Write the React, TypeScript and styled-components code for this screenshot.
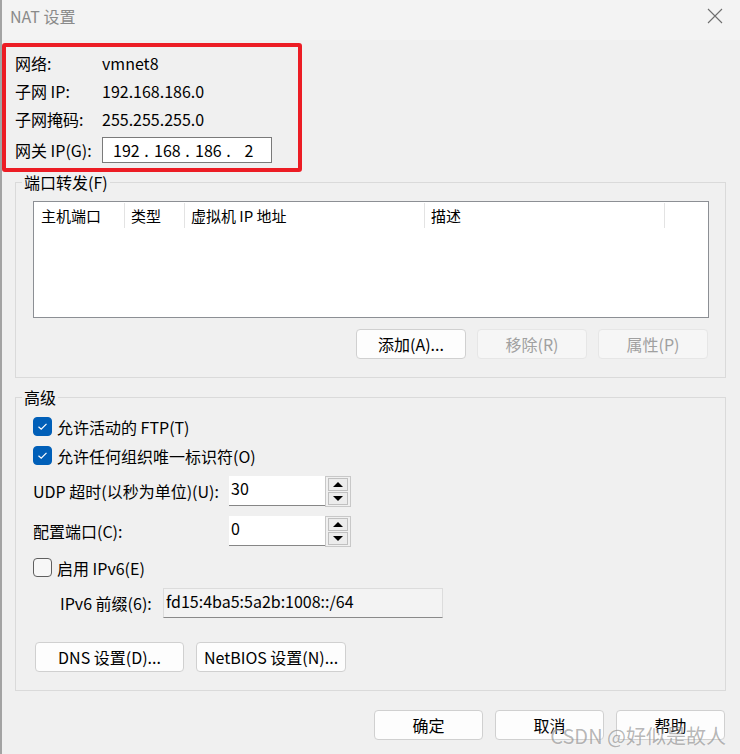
import React from "react";
import styled, { createGlobalStyle } from "styled-components";

const GlobalStyle = createGlobalStyle`
  html, body { margin: 0; padding: 0; background: #f0f0f0; }
  #root { width: 740px; height: 754px; }
`;

const FONT = `"Noto Sans CJK SC", "Noto Sans", sans-serif`;

const Window = styled.div`
  position: relative;
  width: 740px;
  height: 754px;
  box-sizing: border-box;
  border-left: 2px solid #a3a3a3;
  background: #f0f0f0;
  display: flex;
  flex-direction: column;
  font-family: ${FONT};
  font-size: 16px;
  color: #000;
  overflow: hidden;
`;

const TitleBar = styled.div`
  height: 40px;
  box-sizing: border-box;
  flex: none;
  background: #f3f3f3;
  display: flex;
  align-items: flex-start;
  justify-content: space-between;
  padding: 6px 17px 0 8px;
`;

const Title = styled.span`
  font-size: 16px;
  color: #8a8a8a;
  line-height: 20px;
`;

const CloseWrap = styled.div`
  margin-top: 2px;
  display: flex;
`;

const Body = styled.div`
  padding: 0 14px 0 13px;
  display: flex;
  flex-direction: column;
`;

const InfoGrid = styled.div`
  margin-top: 9px;
  display: grid;
  grid-template-columns: 87px auto;
  grid-template-rows: 28px 28px 28px 34px;
  align-items: center;
  line-height: 20px;
`;

const IpBox = styled.div`
  width: 170px;
  height: 26px;
  box-sizing: border-box;
  border: 1px solid #7a7a7a;
  background: #fff;
  display: flex;
  align-items: center;
  padding-left: 10px;
`;

const IpSeg = styled.span<{ $w: number }>`
  width: ${(p) => p.$w}px;
  text-align: center;
`;

const Group = styled.fieldset<{ $mt: number }>`
  margin: ${(p) => p.$mt}px 0 0;
  padding: 0 16px 18px 17px;
  border: 1px solid #dadada;
  min-width: 0;
`;

const Legend = styled.legend`
  padding: 0 2px;
  margin-left: -11px;
  line-height: 20px;
  font-size: 16px;
`;

const Table = styled.div`
  margin-top: 9px;
  height: 117px;
  box-sizing: border-box;
  border: 1px solid #8c8f94;
  background: #fff;
  padding-top: 1px;
`;

const HeaderRow = styled.div`
  display: flex;
  height: 25px;
`;

const HeaderCell = styled.div<{ $w?: number; $pl?: number; $last?: boolean }>`
  ${(p) => (p.$w ? `width: ${p.$w}px; flex: none;` : "flex: 1;")}
  box-sizing: border-box;
  padding-left: ${(p) => p.$pl ?? 6}px;
  border-right: ${(p) => (p.$last ? "none" : "1px solid #e3e3e3")};
  font-size: 15px;
  line-height: 25px;
  white-space: nowrap;
`;

const ButtonRow = styled.div<{ $mt: number; $mr?: number; $ml?: number; $justify?: string; $gap: number }>`
  display: flex;
  justify-content: ${(p) => p.$justify || "flex-end"};
  gap: ${(p) => p.$gap}px;
  margin-top: ${(p) => p.$mt}px;
  margin-right: ${(p) => p.$mr || 0}px;
  margin-left: ${(p) => p.$ml || 0}px;
`;

const Button = styled.button<{ $w: number; $disabled?: boolean }>`
  width: ${(p) => p.$w}px;
  height: 30px;
  box-sizing: border-box;
  border-radius: 4px;
  border: 1px solid ${(p) => (p.$disabled ? "#e6e6e6" : "#d0d0d0")};
  background: ${(p) => (p.$disabled ? "#f6f6f6" : "#fdfdfd")};
  color: ${(p) => (p.$disabled ? "#a0a0a0" : "#000")};
  font-family: ${FONT};
  font-size: 16px;
  line-height: 20px;
  padding: 0;
  white-space: nowrap;
`;

const CheckRow = styled.div<{ $mt: number }>`
  display: flex;
  align-items: center;
  gap: 5px;
  height: 29px;
  margin-top: ${(p) => p.$mt}px;
  line-height: 20px;
`;

const Box = styled.div<{ $checked?: boolean }>`
  width: 19px;
  height: 19px;
  box-sizing: border-box;
  border-radius: 4px;
  background: ${(p) => (p.$checked ? "#005fb8" : "#f7f7f7")};
  border: 1px solid ${(p) => (p.$checked ? "#005fb8" : "#5f5f5f")};
  display: flex;
  align-items: center;
  justify-content: center;
`;

const FieldRow = styled.div<{ $mt: number }>`
  display: flex;
  align-items: center;
  height: 30px;
  margin-top: ${(p) => p.$mt}px;
  line-height: 20px;
`;

const FieldLabel = styled.span<{ $w: number; $ml?: number }>`
  width: ${(p) => p.$w}px;
  margin-left: ${(p) => p.$ml || 0}px;
  flex: none;
  white-space: nowrap;
`;

const NumInput = styled.div`
  width: 96px;
  height: 30px;
  box-sizing: border-box;
  background: #fff;
  border-bottom: 1px solid #868686;
  padding: 2px 0 0 2px;
  line-height: 20px;
`;

const Spin = styled.div`
  width: 26px;
  height: 31px;
  box-sizing: border-box;
  border: 1px solid #c8c8c8;
  padding: 1px 2px;
  display: flex;
  flex-direction: column;
  gap: 1px;
  align-self: flex-start;
`;

const SpinBtn = styled.div`
  flex: 1;
  border: 1px solid #c0c0c0;
  background: #ececec;
  display: flex;
  align-items: center;
  justify-content: center;
`;

const Tri = styled.div<{ $up?: boolean }>`
  width: 0;
  height: 0;
  border-left: 5px solid transparent;
  border-right: 5px solid transparent;
  ${(p) => (p.$up ? "border-bottom: 5px solid #000;" : "border-top: 5px solid #000;")}
`;

const Prefix = styled.div`
  width: 280px;
  height: 30px;
  box-sizing: border-box;
  background: #f3f3f3;
  border: 1px solid #dcdcdc;
  border-bottom-color: #8a8a8a;
  padding: 2px 0 0 2px;
  line-height: 20px;
  white-space: nowrap;
`;

const Annotation = styled.div`
  position: absolute;
  left: 0;
  top: 43px;
  width: 300px;
  height: 129px;
  box-sizing: border-box;
  border: 4px solid #ec1c24;
  border-radius: 3px;
  pointer-events: none;
`;

const Watermark = styled.div`
  position: absolute;
  right: 14px;
  bottom: 6px;
  font-family: ${FONT};
  font-size: 20px;
  line-height: 24px;
  color: rgba(95, 95, 95, 0.45);
  text-shadow: 0 0 2px rgba(255, 255, 255, 0.6);
  pointer-events: none;
  white-space: nowrap;
`;

const Check = () => (
  <svg width="11" height="9" viewBox="0 0 11 9">
    <path d="M1.5 4.8 L4.2 7.2 L9.5 1.8" fill="none" stroke="#fff" strokeWidth="1.2" />
  </svg>
);

const Close = () => (
  <svg width="16" height="16" viewBox="0 0 16 16">
    <path d="M1 1 L15 15 M15 1 L1 15" stroke="#6e6e6e" strokeWidth="1.1" fill="none" />
  </svg>
);

const Spinner = () => (
  <Spin>
    <SpinBtn>
      <Tri $up />
    </SpinBtn>
    <SpinBtn>
      <Tri />
    </SpinBtn>
  </Spin>
);

export default function App() {
  return (
    <>
      <GlobalStyle />
      <Window>
        <TitleBar>
          <Title>NAT 设置</Title>
          <CloseWrap>
            <Close />
          </CloseWrap>
        </TitleBar>
        <Body>
          <InfoGrid>
            <span>网络:</span>
            <span>vmnet8</span>
            <span>子网 IP:</span>
            <span>192.168.186.0</span>
            <span>子网掩码:</span>
            <span>255.255.255.0</span>
            <span>网关 IP(G):</span>
            <IpBox>
              <IpSeg $w={26}>192</IpSeg>
              <IpSeg $w={15}>.</IpSeg>
              <IpSeg $w={26}>168</IpSeg>
              <IpSeg $w={15}>.</IpSeg>
              <IpSeg $w={26}>186</IpSeg>
              <IpSeg $w={15}>.</IpSeg>
              <IpSeg $w={26}>2</IpSeg>
            </IpBox>
          </InfoGrid>

          <Group $mt={5}>
            <Legend>端口转发(F)</Legend>
            <Table>
              <HeaderRow>
                <HeaderCell $w={91} $pl={7}>主机端口</HeaderCell>
                <HeaderCell $w={60}>类型</HeaderCell>
                <HeaderCell $w={240}>虚拟机 IP 地址</HeaderCell>
                <HeaderCell $w={240}>描述</HeaderCell>
                <HeaderCell $last />
              </HeaderRow>
            </Table>
            <ButtonRow $mt={11} $mr={1} $gap={11}>
              <Button $w={110}>添加(A)...</Button>
              <Button $w={110} $disabled>移除(R)</Button>
              <Button $w={110} $disabled>属性(P)</Button>
            </ButtonRow>
          </Group>

          <Group $mt={9}>
            <Legend>高级</Legend>
            <CheckRow $mt={5}>
              <Box $checked>
                <Check />
              </Box>
              <span>允许活动的 FTP(T)</span>
            </CheckRow>
            <CheckRow $mt={0}>
              <Box $checked>
                <Check />
              </Box>
              <span>允许任何组织唯一标识符(O)</span>
            </CheckRow>
            <FieldRow $mt={6}>
              <FieldLabel $w={196}>UDP 超时(以秒为单位)(U):</FieldLabel>
              <NumInput>30</NumInput>
              <Spinner />
            </FieldRow>
            <FieldRow $mt={10}>
              <FieldLabel $w={196}>配置端口(C):</FieldLabel>
              <NumInput>0</NumInput>
              <Spinner />
            </FieldRow>
            <CheckRow $mt={7}>
              <Box />
              <span>启用 IPv6(E)</span>
            </CheckRow>
            <FieldRow $mt={6}>
              <FieldLabel $w={103} $ml={27}>IPv6 前缀(6):</FieldLabel>
              <Prefix>fd15:4ba5:5a2b:1008::/64</Prefix>
            </FieldRow>
            <ButtonRow $mt={24} $gap={12} $ml={2} $justify="flex-start">
              <Button $w={149}>DNS 设置(D)...</Button>
              <Button $w={150}>NetBIOS 设置(N)...</Button>
            </ButtonRow>
          </Group>

          <ButtonRow $mt={19} $mr={1} $gap={12}>
            <Button $w={109}>确定</Button>
            <Button $w={109}>取消</Button>
            <Button $w={109}>帮助</Button>
          </ButtonRow>
        </Body>
        <Annotation />
        <Watermark>CSDN @好似是故人</Watermark>
      </Window>
    </>
  );
}
